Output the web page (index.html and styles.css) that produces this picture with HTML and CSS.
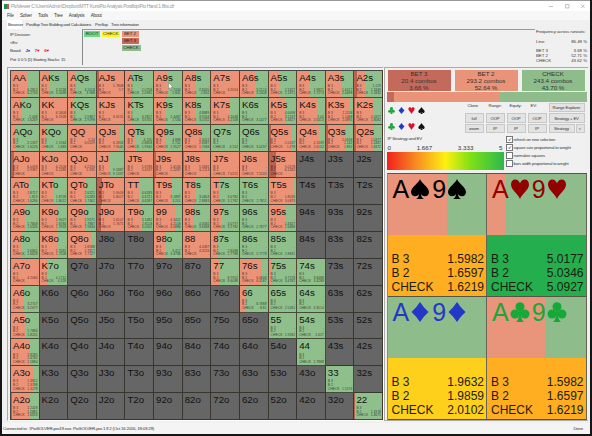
FILE: index.html
```
<!DOCTYPE html>
<html lang="en">
<head>
    <meta charset="UTF-8">
    <meta name="viewport" content="width=device-width, initial-scale=1.0">
    <title>PioViewer</title>
    <link rel="stylesheet" href="styles.css">
</head>
<body>

<svg class="defs" width="0" height="0">
    <symbol id="spade" viewBox="0 0 20 20"><path d="M10 0C11 4 19 8 19 13C19 18 13 18.500 11 15C11.200 17.500 12 19 14 20H6C8 19 8.800 17.500 9 15C7 18.500 1 18 1 13C1 8 9 4 10 0Z"/></symbol>
    <symbol id="heart" viewBox="0 0 20 20"><path d="M10 20C8.500 15 1 11 1 5.500C1 -1 8.500 -1 10 4.500C11.500 -1 19 -1 19 5.500C19 11 11.500 15 10 20Z"/></symbol>
    <symbol id="diamond" viewBox="0 0 20 20"><path d="M10 0Q13.500 5.500 18.500 10Q13.500 14.500 10 20Q6.500 14.500 1.500 10Q6.500 5.500 10 0Z"/></symbol>
    <symbol id="club" viewBox="0 0 20 20"><circle cx="10" cy="4.700" r="4.500"/><circle cx="5" cy="12" r="4.500"/><circle cx="15" cy="12" r="4.500"/><path d="M9 7H11L11.300 15Q11.800 18.500 14 20H6Q8.200 18.500 8.700 15Z"/></symbol>
</svg>

<div class="window">
    <div class="titlebar">
        <span class="app-icon"></span>
        <span class="title">PioViewer C:\Users\Admin\Dropbox\MTT Kurs\Pio Analysis Postflop\Pio Hand 1 8bs.cfr</span>
        <svg class="win-buttons" viewBox="0 0 38 6"><path d="M0 3.500H4M16.500 1.500H20V5H16.500ZM32 1.500L35.500 5M35.500 1.500L32 5"/></svg>
    </div>
    <div class="menu">
        <span>File</span><span>Solver</span><span>Tools</span><span>Tree</span><span>Analysis</span><span>About</span>
    </div>
    <div class="tabs">
        <span class="tab active">Browser</span>
        <span class="tab t2">Postflop Tree Building and Calculations</span>
        <span class="tab t3">Preflop</span>
        <span class="tab t4">Tree information</span>
    </div>

    <div class="info">
        <div class="decision">
            <div>IP Decision:</div>
            <div>&lt;Ev:</div>
            <div class="board"><span>Board</span><b class="blue">J♠</b><b class="red">7♥</b><b class="red">6♥</b></div>
            <div>Pot: 0 0 5 (5) Starting Stacks: 15</div>
        </div>
        <div class="tree">
            <span class="node root">ROOT</span>
            <span class="node current">CHECK</span>
            <div class="node-list">
                <span class="node bet2">BET 2</span>
                <span class="node bet3">BET 3</span>
                <span class="node check">CHECK</span>
            </div>
        </div>
        <div class="freq">
            <div class="freq-title">Frequency across runouts:</div>
            <div class="freq-row line"><span>Line:</span><span>86.48 %</span></div>
            <div class="freq-row"><span>BET 3</span><span>3.68 %</span></div>
            <div class="freq-row"><span>BET 2</span><span>52.71 %</span></div>
            <div class="freq-row"><span>CHECK</span><span>43.62 %</span></div>
        </div>
    </div>

    <div class="main">
        <div class="range-panel">
            <div class="range" id="range"></div>
        </div>

        <div class="side">
            <div class="actions">
                <div class="action bet3">BET 3<br>20.4 combos<br>3.66 %</div>
                <div class="action bet2">BET 2<br>293.2 combos<br>52.64 %</div>
                <div class="action check">CHECK<br>243.4 combos<br>43.70 %</div>
            </div>
            <div class="total-bar"></div>

            <div class="controls">
                <div class="suits">
                    <svg class="green"><use href="#club"/></svg><svg class="blue"><use href="#diamond"/></svg><svg class="red"><use href="#heart"/></svg><svg><use href="#spade"/></svg>
                    <svg class="green"><use href="#club"/></svg><svg class="blue"><use href="#diamond"/></svg><svg class="red"><use href="#heart"/></svg><svg><use href="#spade"/></svg>
                </div>
                <div class="buttons">
                    <span>Clone</span><span>Range:</span><span>Equity:</span><span>EV:</span>
                    <button>full</button><button>OOP</button><button>OOP</button><button>OOP</button>
                    <button>zoom</button><button>IP</button><button>IP</button><button>IP</button>
                </div>
                <div class="views">
                    <button class="wide">Range Explorer</button>
                    <button class="wide">Strategy + EV</button>
                    <button>Strategy</button><button>&lt;</button>
                </div>
            </div>

            <div class="options">
                <div class="scale">
                    <div class="scale-title">IP Strategy and EV</div>
                    <div class="scale-numbers"><span>0</span><span>1.667</span><span>3.333</span><span>5</span></div>
                    <div class="gradient"></div>
                </div>
                <div class="checks">
                    <div><svg class="box" viewBox="0 0 5 5"><path d="M1.200 2.500L2.200 3.600L4 1.300"/></svg>refresh on new selection</div>
                    <div><svg class="box" viewBox="0 0 5 5"><path d="M1.200 2.500L2.200 3.600L4 1.300"/></svg>square size proportional to weight</div>
                    <div><svg class="box" viewBox="0 0 5 5"></svg>normalize squares</div>
                    <div><svg class="box" viewBox="0 0 5 5"></svg>bars width proportional to weight</div>
                </div>
            </div>

            <div class="combos">
                <div class="combo spades">
                    <div class="cards">A<svg><use href="#spade"/></svg>9<svg><use href="#spade"/></svg></div>
                    <div class="evs"><p>B 3<span>1.5982</span></p><p>B 2<span>1.6597</span></p><p>CHECK<span>1.6219</span></p></div>
                </div>
                <div class="combo hearts">
                    <div class="cards">A<svg><use href="#heart"/></svg>9<svg><use href="#heart"/></svg></div>
                    <div class="evs"><p>B 3<span>5.0177</span></p><p>B 2<span>5.0346</span></p><p>CHECK<span>5.0927</span></p></div>
                </div>
                <div class="combo diamonds">
                    <div class="cards">A<svg><use href="#diamond"/></svg>9<svg><use href="#diamond"/></svg></div>
                    <div class="evs"><p>B 3<span>1.9632</span></p><p>B 2<span>1.9859</span></p><p>CHECK<span>2.0102</span></p></div>
                </div>
                <div class="combo clubs">
                    <div class="cards">A<svg><use href="#club"/></svg>9<svg><use href="#club"/></svg></div>
                    <div class="evs"><p>B 3<span>1.5982</span></p><p>B 2<span>1.6597</span></p><p>CHECK<span>1.6219</span></p></div>
                </div>
            </div>
        </div>
    </div>

    <div class="status">
        <span class="connected">Connected to: .\PioSOLVER-pro19.exe. PioSOLVER-pro 1.9.2 (Oct 16 2016, 18:03:29)</span>
        <span class="done">Done</span>
    </div>
</div>
<svg class="cursor" viewBox="0 0 6 9"><path d="M.5 .5V7L2 5.700L3 8L4 7.500L3 5.300H5Z"/></svg>

<script src="script.js"></script>
</body>
</html>
```
FILE: styles.css
```
* {
    box-sizing: border-box;
}

body {
    margin: 0;
    background-color: #151515;
    font-family: "Liberation Sans", Arial, sans-serif;
    font-size: 5px;
    color: #333;
    overflow: hidden;
}

.defs {
    position: absolute;
}

.window {
    width: 588px;
    height: 434px;
    margin-left: 2px;
    background-color: #f0f0f0;
    border-top: 1px solid #999;
    display: flex;
    flex-direction: column;
}

.titlebar {
    height: 10px;
    background-color: #fff;
    display: flex;
    align-items: center;
    padding-left: 2px;
    color: #999;
}

.app-icon {
    width: 5px;
    height: 5px;
    background: linear-gradient(90deg, #2c8a4c 60%, #c55 60%);
    margin-right: 2px;
}

.title {
    font-size: 5px;
    width: 166px;
    white-space: nowrap;
    letter-spacing: -0.36px;
}

.win-buttons {
    width: 38px;
    height: 6px;
    margin-left: auto;
    margin-right: 3px;
    fill: none;
    stroke: #999;
    stroke-width: 0.6;
}

.menu {
    height: 9px;
    display: flex;
    align-items: center;
    background-color: #f7f7f7;
    padding-left: 5px;
    gap: 6.3px;
    font-size: 4.6px;
    letter-spacing: -0.2px;
}

.tabs {
    height: 9px;
    display: flex;
    align-items: center;
    padding-left: 5px;
    font-size: 4.4px;
    white-space: nowrap;
}

.tab {
    height: 9px;
    line-height: 9px;
}

.tab.active {
    width: 15px;
    background-color: #fff;
    padding-left: 1px;
    letter-spacing: -0.15px;
}

.t2 {
    width: 69px;
    margin-left: 4px;
    letter-spacing: -0.29px;
}

.t3 {
    width: 16px;
    letter-spacing: -0.15px;
}

.t4 {
    letter-spacing: -0.25px;
}

.info {
    height: 38px;
    display: flex;
    margin-left: 5px;
}

.decision {
    width: 75px;
    padding: 2px 0 0 3px;
    font-size: 4.3px;
    line-height: 8.2px;
    letter-spacing: -0.2px;
    white-space: nowrap;
}

.board {
    display: flex;
    gap: 5px;
}

.blue {
    color: #2438c8;
}

.red {
    color: #e01030;
}

.green {
    color: #17a83a;
}

.tree {
    width: 453px;
    height: 36px;
    border-top: 1px solid #999;
    border-left: 1px solid #888;
    padding: 1px;
    display: flex;
    gap: 1.500px;
}

.node {
    display: block;
    height: 5.8px;
    line-height: 6px;
    font-size: 4.4px;
    text-align: center;
    color: #222;
}

.node.root {
    width: 16px;
    background-color: #6fd98a;
}

.node.current {
    width: 18.500px;
    background-color: #fdf52a;
}

.node-list {
    width: 17px;
    display: flex;
    flex-direction: column;
    gap: 1.2px;
}

.node.check {
    width: 19px;
}

.bet3 {
    background-color: #c56a5a;
}

.bet2 {
    background-color: #e99478;
}

.check {
    background-color: #8fbc8b;
}

.freq {
    width: 52px;
    font-size: 4.3px;
    line-height: 5px;
    padding-left: 1px;
    white-space: nowrap;
}

.freq-title {
    letter-spacing: -0.06px;
}

.freq-row {
    display: flex;
    justify-content: space-between;
}

.freq-row.line {
    margin: 4.500px 0 4px;
}

.main {
    height: 356px;
    display: flex;
    padding-left: 5px;
}

.range-panel {
    width: 377px;
    height: 354px;
    padding: 2px 0 0 2px;
    border-top: 1px solid #aaa;
    border-left: 1px solid #aaa;
    border-right: 1px solid #fff;
    border-bottom: 1px solid #fff;
}

.range {
    width: 373px;
    height: 350px;
    display: grid;
    grid-template-columns: repeat(13, 1fr);
    grid-template-rows: repeat(13, 1fr);
    border-top: 1px solid #444;
    border-left: 1px solid #444;
}

.hand {
    min-width: 0;
    min-height: 0;
    overflow: hidden;
    display: flex;
    flex-direction: column;
    justify-content: space-between;
    padding: 2px 1px 1px 2px;
    background-color: #666;
    border-right: 1px solid rgba(40, 40, 30, 0.75);
    border-bottom: 1px solid rgba(40, 40, 30, 0.75);
    color: #111;
}

.hand.played {
    background: linear-gradient(90deg, #bb6251 var(--b3), #ec9277 var(--b3), #ec9277 var(--b2), #8fbf8b var(--b2));
}

.hand-name {
    font-size: 9.7px;
    line-height: 10px;
}

.hand-ev {
    font-size: 3.4px;
    line-height: 3.6px;
    color: rgba(0, 0, 0, 0.7);
}

.hand-ev div {
    display: flex;
    justify-content: space-between;
}

.side {
    width: 204px;
    height: 354px;
    border: 1px solid #aaa;
    border-right: none;
    padding: 1.500px 0 0 1.500px;
    display: flex;
    flex-direction: column;
}

.actions {
    display: flex;
    gap: 4px;
    height: 22px;
    padding-left: 1px;
}

.action {
    width: 63px;
    text-align: center;
    font-size: 6.2px;
    line-height: 7px;
}

.total-bar {
    width: 200px;
    height: 10px;
    margin-top: 1px;
    background: linear-gradient(90deg, #c56a5a 3.66%, #e99478 3.66%, #e99478 56.3%, #8fbc8b 56.3%);
}

.controls {
    height: 33px;
    display: flex;
}

.suits {
    width: 78px;
    display: grid;
    grid-template-columns: repeat(4, 10px);
    grid-template-rows: 16px 16px;
    align-items: center;
    padding-left: 1px;
}

.suits svg {
    width: 7px;
    height: 7px;
    fill: currentColor;
    color: #111;
}

.suits svg.green { color: #17a83a; }
.suits svg.blue { color: #2438c8; }
.suits svg.red { color: #e01030; }

.buttons {
    display: grid;
    grid-template-columns: repeat(4, 19px);
    grid-template-rows: 9px 9.500px 9.500px;
    column-gap: 2px;
    row-gap: 1px;
    font-size: 4.3px;
    letter-spacing: -0.15px;
    padding-top: 1px;
}

.buttons span {
    padding-left: 3px;
}

button {
    font-family: inherit;
    font-size: 4.300px;
    letter-spacing: -0.15px;
    padding: 0;
    color: #333;
    background-color: #e3e3e3;
    border: 0.500px solid #c8c8c8;
    white-space: nowrap;
    min-width: 0;
}

.views {
    display: grid;
    grid-template-columns: 26px 9px;
    grid-template-rows: 9.500px 9.500px 9.500px;
    gap: 1px;
    padding-top: 0.500px;
    margin-left: 2px;
}

.wide {
    grid-column: span 2;
}

.options {
    height: 37.500px;
    display: flex;
}

.scale {
    width: 117px;
}

.scale-title {
    font-size: 4.4px;
    height: 7.500px;
    letter-spacing: -0.15px;
    padding: 1px 0 0 1px;
}

.scale-numbers {
    display: flex;
    justify-content: space-between;
    font-size: 6.2px;
    line-height: 8px;
    height: 8px;
    padding: 1px 1px 0;
}

.gradient {
    height: 18.500px;
    margin-top: 1px;
    background: linear-gradient(90deg, #f0201c, #f98c22 25%, #fdf010 50%, #7be016 72%, #2db84d);
}

.checks {
    padding: 0 0 0 3px;
    font-size: 4.2px;
    white-space: nowrap;
}

.checks div {
    display: flex;
    align-items: center;
    letter-spacing: -0.16px;
    height: 8.1px;
}

.box {
    width: 5px;
    height: 5px;
    background-color: #fff;
    outline: 0.500px solid #777;
    margin-right: 2px;
    fill: none;
    stroke: #333;
    stroke-width: 0.7;
}

.combos {
    width: 200px;
    height: 248px;
    display: grid;
    grid-template-columns: 1fr 1fr;
    grid-template-rows: 1fr 1fr;
    border-top: 1px solid #555;
    border-left: 1px solid #888;
}

.combo {
    display: flex;
    flex-direction: column;
    border-right: 1px solid #665;
    border-bottom: 1px solid #554;
}

.cards {
    height: 61px;
    display: flex;
    align-items: flex-start;
    padding: 2.500px 0 0 5px;
    font-size: 25px;
    line-height: 27px;
}

.cards svg {
    width: 20px;
    height: 20px;
    margin: 2.500px 2px 0 1px;
    fill: currentColor;
}

.evs {
    flex: 1;
    padding: 18.500px 2px 0 4px;
    font-size: 12px;
    line-height: 13.7px;
    color: #1c1c10;
}

.evs p {
    margin: 0;
    display: flex;
    justify-content: space-between;
}

.spades .cards { color: #000; background: linear-gradient(90deg, #e8957c 60%, #8fbc8b 60%); }
.spades .evs { background-color: #ffae21; }
.hearts .cards { color: #930000; background: linear-gradient(90deg, #e8957c 19%, #8fbc8b 19%); }
.hearts .evs { background-color: #24ae4d; }
.diamonds .cards { color: #2438c8; background-color: #8fbc8b; }
.diamonds .evs { background-color: #ffd01b; }
.clubs .cards { color: #17a83a; background: linear-gradient(90deg, #e8957c 59%, #8fbc8b 59%); }
.clubs .evs { background-color: #ffae21; }

.status {
    flex: 1;
    display: flex;
    justify-content: space-between;
    align-items: center;
    padding: 0 7px 0 1px;
    font-size: 4.4px;
    background-color: #f4f4f4;
}

.connected,
.done {
    letter-spacing: -0.22px;
}

/* mouse pointer over the A9s square */
.cursor {
    position: absolute;
    left: 168px;
    top: 82px;
    width: 6px;
    height: 9px;
    fill: #fff;
    stroke: #555;
    stroke-width: 0.4;
}
```
FILE: script.js
```
const ranks = "AKQJT98765432";

// hand: [end of BET 3, end of BET 2 (both in %), EV of BET 3, BET 2, CHECK]
const hands = {
    AA: [0, 58, "-", "6.2813", "6.2743"],
    AKs: [0, 35, "-", "3.5238", "3.5088"],
    AQs: [0, 24, "-", "4.1018", "3.988"],
    AJs: [9, 100, "5.7808", "5.7", "-"],
    ATs: [0, 22, "-", "2.0758", "2.0981"],
    A9s: [0, 48, "-", "2.7434", "2.841"],
    A8s: [0, 50, "-", "2.8420", "2.862"],
    A7s: [0, 100, "-", "4.2054", "-"],
    A6s: [0, 52, "-", "3.2124", "3.2408"],
    A5s: [0, 42, "-", "2.1627", "2.1871"],
    A4s: [0, 44, "-", "1.9821", "1.7274"],
    A3s: [0, 58, "-", "1.6217", "2.0698"],
    A2s: [9, 40, "1.129", "1.1849", "1.1832"],
    AKo: [0, 40, "-", "2.038", "1.6269"],
    KK: [0, 100, "6.5408", "6.1928", "-"],
    KQs: [0, 21, "-", "2.9387", "2.9298"],
    KJs: [0, 100, "-", "6.6151", "-"],
    KTs: [0, 22, "-", "3.2817", "3.6705"],
    K9s: [0, 41, "-", "2.4487", "2.534"],
    K8s: [0, 50, "4.8889", "3.9204", "3.0742"],
    K7s: [0, 64, "-", "4.2048", "4.2108"],
    K6s: [0, 0, "-", "-", "3.1477"],
    K5s: [0, 62, "4.0098", "3.1137", "1.4627"],
    K4s: [0, 74, "-", "2.03", "2.0413"],
    K3s: [5, 84, "1.1158", "1.1088", "2.0895"],
    K2s: [5, 70, "-", "2.0377", "1.8082"],
    AQo: [0, 17, "-", "2.1337", "1.6226"],
    KQo: [0, 17, "-", "2.1944", "1.883"],
    QQ: [0, 100, "5.24", "6.0129", "-"],
    QJs: [0, 84, "-", "6.2818", "7.9045"],
    QTs: [0, 38, "4.720", "2.8858", "1.9942"],
    Q9s: [4, 43, "4.888", "2.702", "1.9527"],
    Q8s: [0, 72, "2.3012", "2.8387", "1.7084"],
    Q7s: [0, 0, "-", "-", "4.152"],
    Q6s: [0, 0, "-", "-", "3.0237"],
    Q5s: [8, 85, "-", "2.0137", "1.278"],
    Q4s: [0, 80, "-", "2.1339", "2.0102"],
    Q3s: [6, 74, "1.0928", "1.142", "1.892"],
    Q2s: [8, 72, "1.0377", "1.2487", "1.8372"],
    AJo: [10, 100, "6.0098", "5.9387", "-"],
    KJo: [0, 100, "6.2108", "6.1285", "-"],
    QJo: [0, 100, "6.2294", "5.935", "-"],
    JJ: [0, 46, "-", "9.1887", "9.1337"],
    JTs: [0, 100, "5.8788", "5.4137", "-"],
    J9s: [8, 100, "5.6136", "5.2287", "-"],
    J8s: [5, 100, "5.5681", "6.2113", "-"],
    J7s: [0, 100, "-", "-", "7.0221"],
    J6s: [0, 100, "-", "-", "7.2243"],
    J5s: [26, 100, "5.0178", "6.1282", "-"],
    ATo: [0, 68, "1.8717", "1.819", "1.6286"],
    KTo: [0, 50, "-", "1.8728", "1.8012"],
    QTo: [0, 61, "2.0221", "2.0283", "1.7462"],
    JTo: [20, 100, "5.9018", "5.8017", "-"],
    TT: [0, 50, "4.6283", "4.6721", "4.6287"],
    T9s: [5, 64, "-", "3.1887", "3.201"],
    T8s: [0, 45, "-", "3.0803", "2.8883"],
    T7s: [0, 33, "-", "3.0782", "3.1782"],
    T6s: [0, 0, "-", "-", "2.7811"],
    T5s: [0, 90, "-", "1.8018", "3.0873"],
    A9o: [0, 52, "-", "1.7808", "1.6326"],
    K9o: [0, 68, "1.9027", "1.8784", "1.7818"],
    Q9o: [0, 59, "1.9271", "1.7887", "1.9634"],
    J9o: [13, 100, "5.6107", "5.7671", "-"],
    T9o: [0, 58, "3.1482", "2.8118", "3.0502"],
    99: [0, 76, "4.3422", "4.2158", "4.0886"],
    "98s": [0, 40, "-", "4.3082", "3.8488"],
    "97s": [0, 35, "-", "3.0777", "3.1782"],
    "96s": [0, 0, "-", "-", "2.7877"],
    "95s": [0, 61, "-", "2.4327", "2.6488"],
    A8o: [0, 37, "-", "1.6841", "1.6628"],
    K8o: [0, 68, "-", "1.7081", "1.7208"],
    Q8o: [0, 84, "1.8588", "1.7817", "1.7127"],
    "98o": [0, 43, "-", "3.417", "3.4788"],
    88: [0, 100, "4.4387", "4.3226", "-"],
    "87s": [0, 26, "-", "2.8088", "2.7788"],
    "86s": [0, 0, "-", "-", "2.7778"],
    "85s": [0, 0, "-", "-", "2.8831"],
    A7o: [0, 100, "-", "4.2084", "-"],
    K7o: [0, 31, "-", "4.1712", "4.328"],
    77: [0, 33, "-", "8.7952", "8.6088"],
    "76s": [0, 79, "-", "6.0808", "6.4187"],
    "75s": [0, 10, "-", "3.7178", "3.4782"],
    "74s": [0, 4, "-", "3.8488", "3.4288"],
    A6o: [0, 46, "-", "3.2707", "3.2677"],
    66: [0, 20, "-", "8.7888", "8.81"],
    "65s": [0, 0, "-", "-", "2.5281"],
    "64s": [0, 0, "-", "-", "3.3514"],
    A5o: [0, 51, "-", "1.7884", "1.8231"],
    55: [0, 0, "-", "-", "1.9282"],
    "54s": [0, 0, "-", "-", "2.617"],
    A4o: [0, 63, "1.8285", "1.4782", "1.5884"],
    44: [0, 0, "-", "-", "1.7888"],
    A3o: [0, 77, "1.3812", "1.3788", "1.3278"],
    33: [0, 0, "-", "-", "1.5576"],
    A2o: [4, 66, "1.2428", "1.2881", "1.6818"],
    22: [3, 3, "-", "1.3378", "1.4675"]
};

function handName(row, col) {
    if (row === col) return ranks[row] + ranks[col];
    return row < col ? ranks[row] + ranks[col] + "s" : ranks[col] + ranks[row] + "o";
}

const range = document.getElementById("range");

for (let row = 0; row < 13; row++) {
    for (let col = 0; col < 13; col++) {
        const name = handName(row, col);
        const data = hands[name];
        const cell = document.createElement("div");
        cell.className = "hand";
        cell.innerHTML = `<div class="hand-name">${name}</div>`;
        if (data) {
            cell.classList.add("played");
            cell.style.setProperty("--b3", data[0] + "%");
            cell.style.setProperty("--b2", data[1] + "%");
            cell.innerHTML += `<div class="hand-ev">
                <div><span>B 3</span><span>${data[2]}</span></div>
                <div><span>B 2</span><span>${data[3]}</span></div>
                <div><span>CHECK</span><span>${data[4]}</span></div>
            </div>`;
        }
        range.appendChild(cell);
    }
}
```
